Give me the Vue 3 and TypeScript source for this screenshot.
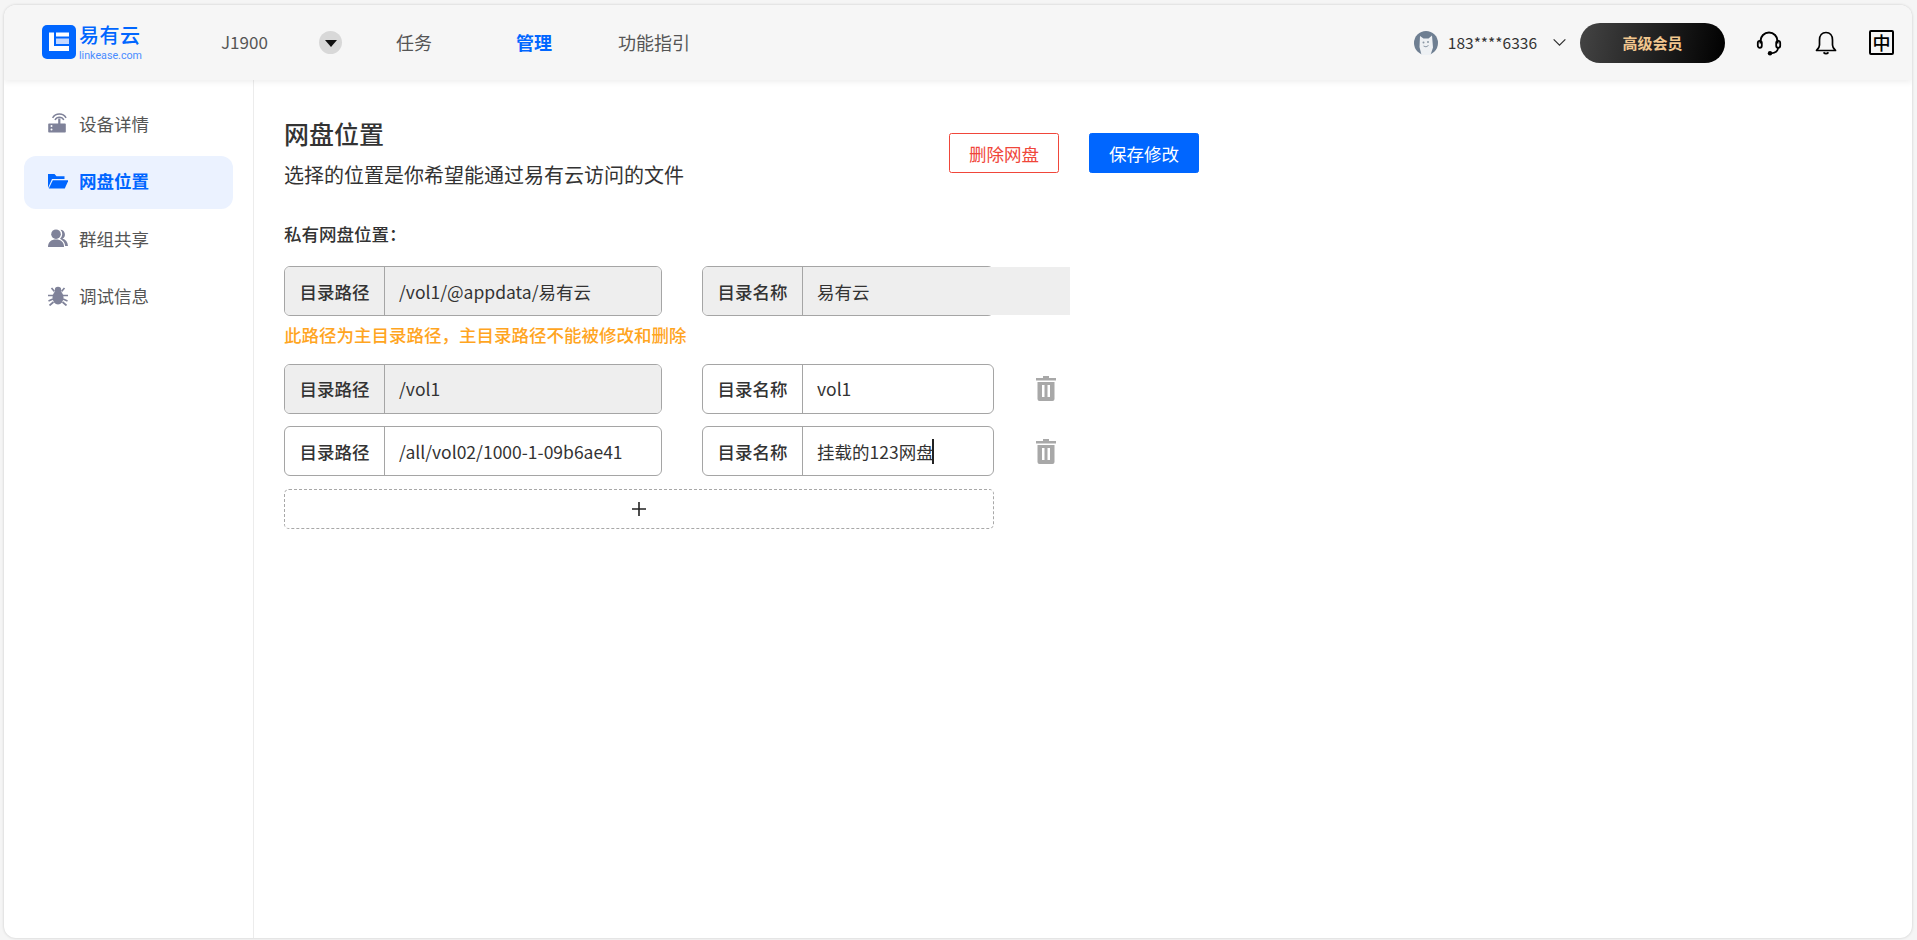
<script setup lang="ts">
interface NavItem { label: string; active?: boolean }
const navItems: NavItem[] = [
  { label: '任务' },
  { label: '管理', active: true },
  { label: '功能指引' },
]
const sideItems = [
  { key: 'device', label: '设备详情' },
  { key: 'folder', label: '网盘位置', active: true },
  { key: 'group', label: '群组共享' },
  { key: 'debug', label: '调试信息' },
]
</script>

<template>
  <div class="page">
    <div class="window">
      <header class="topbar">
        <div class="logo">
          <svg class="logo-icon" viewBox="0 0 34 34" width="34" height="34">
            <rect width="34" height="34" rx="5" fill="#0066ff" />
            <path d="M7 7.500h5v13.500h15v5H7z" fill="#fff" />
            <path d="M14 7.500h13v4H14z" fill="#fff" />
            <path d="M14 13.500h13v5.500H14z" fill="#c6d9ff" />
          </svg>
          <div class="logo-text">
            <span class="logo-cn">易有云</span>
            <span class="logo-en">linkease.com</span>
          </div>
        </div>
        <span class="device-name">J1900</span>
        <span class="device-drop"><i class="tri"></i></span>
        <nav class="nav">
          <a v-for="n in navItems" :key="n.label" class="nav-item" :class="{ active: n.active }">{{ n.label }}</a>
        </nav>
        <div class="top-right">
          <svg class="avatar" viewBox="0 0 24 24" width="24" height="24">
            <circle cx="12" cy="12" r="12" fill="#6f7f92" />
            <path d="M6 5l3.500 2.500h5L18 4.500l1 12-2.500 7.500h-9L5.500 16z" fill="#eef1f4" />
            <circle cx="9.500" cy="11.500" r="1" fill="#8b98a6" />
            <circle cx="14" cy="11" r="1" fill="#8b98a6" />
            <path d="M9.500 15q2.500 2 5-.5" stroke="#8b98a6" stroke-width="1" fill="none" />
          </svg>
          <span class="phone">183****6336</span>
          <svg class="chev" viewBox="0 0 16 10" width="15" height="9">
            <path d="M1.500 1.500L8 8l6.500-6.500" stroke="#333" stroke-width="1.400" fill="none" />
          </svg>
          <span class="vip">高级会员</span>
          <svg class="headset" viewBox="0 0 26 26" width="26" height="26">
            <path d="M4.500 13.500V11a8.500 8.500 0 0 1 17 0v2.500" stroke="#000" stroke-width="2" fill="none" />
            <rect x="1.800" y="10.800" width="4" height="7" rx="2" stroke="#000" stroke-width="1.800" fill="none" />
            <rect x="20.200" y="10.800" width="4" height="7" rx="2" stroke="#000" stroke-width="1.800" fill="none" />
            <path d="M22 18c0 3.500-3 5-7 5.300" stroke="#000" stroke-width="1.800" fill="none" />
            <circle cx="14" cy="23.200" r="2.200" fill="#000" />
          </svg>
          <svg class="bell" viewBox="0 0 22 24" width="22" height="24">
            <path d="M11 1.500c-4 0-6.500 3.200-6.500 7.500v5c0 2.500-1 3.800-3 5.500h19c-2-1.700-3-3-3-5.500V9c0-4.300-2.500-7.500-6.500-7.500z" stroke="#000" stroke-width="1.700" fill="none" stroke-linejoin="round" />
            <path d="M8.500 21.300q2.500 2.600 5 0" stroke="#000" stroke-width="1.700" fill="none" />
          </svg>
          <span class="lang">中</span>
        </div>
      </header>

      <div class="body">
        <aside class="sidebar">
          <div v-for="s in sideItems" :key="s.key" class="side-item" :class="{ active: s.active }">
            <svg class="side-icon" viewBox="0 0 20 20" width="20" height="20">
              <g v-if="s.key === 'device'" fill="#7f8299">
                <path d="M1 10.500h16a.8.8 0 0 1 .8.8v7.400a.8.8 0 0 1-.8.8H1a.8.8 0 0 1-.8-.8v-7.400a.8.8 0 0 1 .8-.8z" />
                <rect x="10.200" y="5.500" width="2.200" height="6" />
                <path d="M7 7a5 5 0 0 1 8.800 0M4.600 4.800a8 8 0 0 1 13.500 0" stroke="#7f8299" stroke-width="1.500" fill="none" />
                <circle cx="3.500" cy="13" r="1" fill="#fff" />
                <circle cx="3.500" cy="16.500" r="1" fill="#fff" />
              </g>
              <g v-else-if="s.key === 'folder'" fill="#0066ff">
                <path d="M0 3h6.500l2 2.200h8V8H4L0 17z" />
                <path d="M4.800 9.200H20.500L16.800 17.500H0.800z" />
              </g>
              <g v-else-if="s.key === 'group'" fill="#7f8299">
                <circle cx="8" cy="6.200" r="4.800" />
                <path d="M0 19c0-5 3-7.500 8-7.500s8 2.500 8 7.500z" />
                <path d="M12.500 1.800a4.700 4.700 0 0 1 2 8.800c3 1 5.300 3.500 5.500 7.400h-2.800c-.3-3.500-2.500-6-5.200-7.300a6 6 0 0 0 .5-8.900z" />
              </g>
              <g v-else fill="#7f8299">
                <ellipse cx="10" cy="11.500" rx="5.500" ry="7" />
                <circle cx="10" cy="4" r="3.200" />
                <path d="M3.500 2l3 3.500M16.500 2l-3 3.500M0 9.500h5M20 9.500h-5M0.500 15l4.500-2M19.500 15l-4.500-2M1.500 19.500l4-3.500M18.500 19.500l-4-3.500" stroke="#7f8299" stroke-width="1.700" fill="none" />
              </g>
            </svg>
            <span>{{ s.label }}</span>
          </div>
        </aside>

        <main class="main">
          <div class="head">
            <div class="head-text">
              <h1 class="title">网盘位置</h1>
              <p class="sub">选择的位置是你希望能通过易有云访问的文件</p>
            </div>
            <div class="actions">
              <button class="btn danger">删除网盘</button>
              <button class="btn primary">保存修改</button>
            </div>
          </div>

          <div class="section-label">私有网盘位置&#xFF1A;</div>

          <div class="row">
            <div class="field path disabled">
              <span class="field-label">目录路径</span>
              <span class="field-value">/vol1/@appdata/易有云</span>
            </div>
            <div class="field name disabled overflow">
              <span class="field-label">目录名称</span>
              <span class="field-value">易有云</span>
            </div>
          </div>
          <div class="hint">此路径为主目录路径&#xFF0C;主目录路径不能被修改和删除</div>

          <div class="row">
            <div class="field path disabled">
              <span class="field-label">目录路径</span>
              <span class="field-value">/vol1</span>
            </div>
            <div class="field name">
              <span class="field-label">目录名称</span>
              <span class="field-value">vol1</span>
            </div>
            <svg class="trash" viewBox="0 0 20 25" width="20" height="25">
              <path d="M7 0h6v2h7v2.500H0V2h7z" fill="#a8a8a8" />
              <path fill-rule="evenodd" d="M1.500 6h17v17a2 2 0 0 1-2 2h-13a2 2 0 0 1-2-2zM6 9v12h2.500V9zM11.500 9v12H14V9z" fill="#a8a8a8" />
            </svg>
          </div>

          <div class="row">
            <div class="field path">
              <span class="field-label">目录路径</span>
              <span class="field-value">/all/vol02/1000-1-09b6ae41</span>
            </div>
            <div class="field name">
              <span class="field-label">目录名称</span>
              <span class="field-value">挂载的123网盘<i class="caret"></i></span>
            </div>
            <svg class="trash" viewBox="0 0 20 25" width="20" height="25">
              <path d="M7 0h6v2h7v2.500H0V2h7z" fill="#a8a8a8" />
              <path fill-rule="evenodd" d="M1.500 6h17v17a2 2 0 0 1-2 2h-13a2 2 0 0 1-2-2zM6 9v12h2.500V9zM11.500 9v12H14V9z" fill="#a8a8a8" />
            </svg>
          </div>

          <button class="add"><svg viewBox="0 0 16 16" width="16" height="16"><path d="M8 1v14M1 8h14" stroke="#222" stroke-width="1.600" /></svg></button>
        </main>
      </div>
    </div>
  </div>
</template>

<style>
html, body { margin: 0; background: #f5f5f5; }
</style>

<style scoped>
.page {
  height: 940px;
  box-sizing: border-box;
  padding: 5px 5px 2px 4px;
  background: #f5f5f5;
  font-family: "Noto Sans CJK SC", "Noto Sans", sans-serif;
  color: #333;
  overflow: hidden;
}
.window {
  height: 100%;
  background: #fff;
  border-radius: 12px;
  box-shadow: 0 0 3px rgba(0, 0, 0, 0.18);
  display: flex;
  flex-direction: column;
  overflow: hidden;
}
.topbar {
  height: 75px;
  flex: none;
  background: #f6f6f6;
  box-shadow: 0 2px 6px rgba(0, 0, 0, 0.07);
  display: flex;
  align-items: center;
  padding: 0 18px 0 38px;
  position: relative;
  z-index: 1;
}
.logo { display: flex; align-items: center; gap: 3px; width: 179px; flex: none; margin-top: -1px; }
.logo-icon { flex: none; }
.logo-text { display: flex; flex-direction: column; height: 38px; justify-content: space-between; margin-top: -1px; }
.logo-cn { font-size: 20px; line-height: 24px; color: #0066ff; font-weight: 500; letter-spacing: 0.5px; }
.logo-en { font-size: 10.700px; line-height: 11px; color: #4a8cff; white-space: nowrap; font-family: Roboto, sans-serif; }
.device-name { font-size: 17px; color: #555; width: 98px; flex: none; margin-top: -2px; }
.device-drop {
  width: 23px; height: 23px; border-radius: 50%; background: #d8d8d8; flex: none;
  display: flex; align-items: center; justify-content: center; margin-top: -1px;
}
.tri { width: 0; height: 0; border-left: 6.500px solid transparent; border-right: 6.500px solid transparent; border-top: 7px solid #111; margin-top: 2px; }
.nav { display: flex; margin-left: 54px; margin-top: -2px; }
.nav-item { font-size: 18px; color: #555; }
.nav-item + .nav-item { margin-left: 84px; }
.nav-item.active + .nav-item { margin-left: 66px; }
.nav-item.active { color: #0066ff; font-weight: 700; }
.top-right { margin-left: auto; display: flex; align-items: center; }
.avatar { flex: none; }
.phone { font-size: 15.500px; color: #333; margin-left: 10px; margin-top: -1px; }
.chev { margin-left: 15px; flex: none; }
.vip {
  margin-left: 13px; width: 145px; height: 40px; border-radius: 20px;
  background: linear-gradient(100deg, #444 0%, #000 100%);
  color: #f2c78f; font-size: 15px; font-weight: 700;
  display: flex; align-items: center; justify-content: center;
}
.headset { margin-left: 31px; flex: none; }
.bell { margin-left: 33px; flex: none; }
.lang {
  margin-left: 32px; width: 25px; height: 25px; box-sizing: border-box;
  border: 2px solid #000; border-radius: 2px; color: #000;
  font-size: 18px; line-height: 20px; font-weight: 500; text-align: center;
}
.body { flex: 1; display: flex; min-height: 0; }
.sidebar {
  width: 250px; flex: none; box-sizing: border-box;
  border-right: 1px solid #ececec; padding: 18px 20px 0;
  display: flex; flex-direction: column; gap: 4.500px;
}
.side-item {
  height: 53px; width: 209px; box-sizing: border-box; padding: 0 0 3px 24px;
  border-radius: 12px; display: flex; align-items: center; gap: 11px;
  font-size: 17.500px; color: #555;
}
.side-item.active { background: #ebf2ff; color: #0066ff; font-weight: 700; }
.side-icon { flex: none; }
.main { flex: 1; padding: 38px 0 0 30px; min-width: 0; }
.head { display: flex; justify-content: space-between; width: 915px; }
.head-text { display: flex; flex-direction: column; }
.title { margin: 0; font-size: 25px; line-height: 30px; font-weight: 500; color: #333; }
.sub { margin: 13px 0 0; font-size: 20px; line-height: 28px; color: #333; }
.actions { display: flex; gap: 30px; margin-top: 15px; }
.btn {
  width: 110px; height: 40px; box-sizing: border-box; border-radius: 2.500px;
  font: inherit; font-size: 17.500px; padding: 0;
}
.btn.danger { background: #fff; border: 1px solid #f0463a; color: #f0463a; }
.btn.primary { background: #0066ff; border: 1px solid #0066ff; color: #fff; }
.section-label { margin-top: 33px; font-size: 17.500px; line-height: 24px; font-weight: 500; color: #333; }
.row { display: flex; align-items: center; margin-top: 12.500px; }
.section-label + .row { margin-top: 20px; }
.hint + .row { margin-top: 16.500px; }
.field {
  height: 50px; box-sizing: border-box; border: 1px solid #a5a5a5; border-radius: 6px;
  display: flex; font-size: 17.500px; color: #333; flex: none;
}
.field.path { width: 378px; }
.field.name { width: 292px; margin-left: 40px; }
.field-label {
  width: 100px; box-sizing: border-box; border-right: 1px solid #a5a5a5; flex: none;
  display: flex; align-items: center; justify-content: center; font-weight: 500; color: #333;
  border-radius: 5px 0 0 5px;
}
.field-value { flex: 1; padding-left: 14px; display: flex; align-items: center; white-space: nowrap; border-radius: 0 5px 5px 0; }
.field.disabled .field-label, .field.disabled .field-value { background: #eeeeee; }
.field.overflow .field-value { flex: none; width: 267px; box-sizing: border-box; border-radius: 0; }
.caret { width: 2px; height: 25px; background: #222; display: inline-block; margin-left: -2px; }
.trash { margin-left: 42px; flex: none; }
.hint { margin-top: 7px; font-size: 17.500px; line-height: 24px; font-weight: 500; color: #ffa51f; }
.add {
  margin-top: 13px; width: 710px; height: 40px; box-sizing: border-box;
  border: 1px dashed #a8a8a8; border-radius: 5px; background: #fff; padding: 0;
  display: flex; align-items: center; justify-content: center;
}
</style>
